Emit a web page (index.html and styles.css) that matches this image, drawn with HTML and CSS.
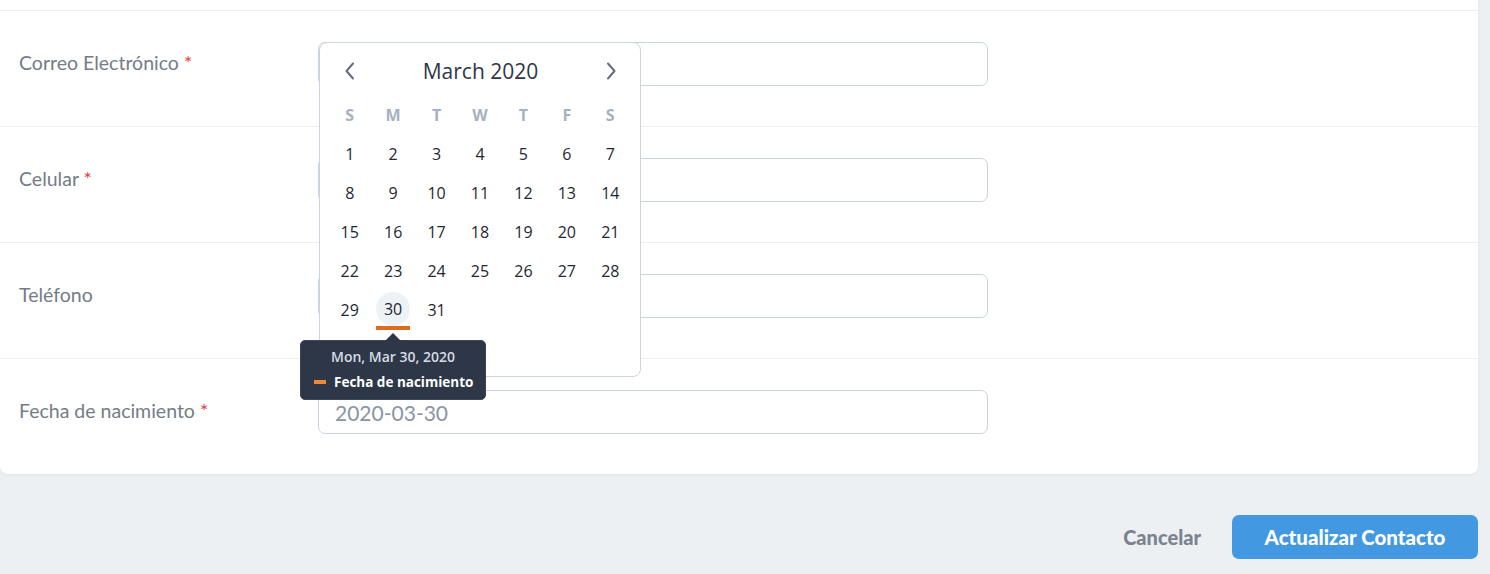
FILE: index.html
```html
<!DOCTYPE html>
<html lang="es">
<head>
<meta charset="utf-8">
<title>Editar contacto</title>
<link rel="stylesheet" href="styles.css">
</head>
<body>
<div class="page">
  <div class="card">
    <div class="row-stub"></div>
    <div class="row">
      <label class="label">Correo Electrónico <span class="req">*</span></label>
      <div class="input"></div>
    </div>
    <div class="row">
      <label class="label">Celular <span class="req">*</span></label>
      <div class="input"></div>
    </div>
    <div class="row">
      <label class="label">Teléfono</label>
      <div class="input"></div>
    </div>
    <div class="row last">
      <label class="label">Fecha de nacimiento <span class="req">*</span></label>
      <div class="input">2020-03-30</div>
    </div>

    <div class="popover">
      <div class="cal-header">
        <span class="arrow"><svg width="12" height="18" viewBox="0 0 12 18"><path d="M9 1.5 L2.5 9 L9 16.5" fill="none" stroke="#5f6e87" stroke-width="2" stroke-linecap="round" stroke-linejoin="round"/></svg></span>
        <span class="title">March 2020</span>
        <span class="arrow"><svg width="12" height="18" viewBox="0 0 12 18"><path d="M3 1.5 L9.5 9 L3 16.5" fill="none" stroke="#5f6e87" stroke-width="2" stroke-linecap="round" stroke-linejoin="round"/></svg></span>
      </div>
      <div class="grid weekdays">
        <span>S</span><span>M</span><span>T</span><span>W</span><span>T</span><span>F</span><span>S</span>
      </div>
      <div class="grid days">
        <span>1</span><span>2</span><span>3</span><span>4</span><span>5</span><span>6</span><span>7</span>
        <span>8</span><span>9</span><span>10</span><span>11</span><span>12</span><span>13</span><span>14</span>
        <span>15</span><span>16</span><span>17</span><span>18</span><span>19</span><span>20</span><span>21</span>
        <span>22</span><span>23</span><span>24</span><span>25</span><span>26</span><span>27</span><span>28</span>
        <span>29</span><span class="today"><i class="circle">30</i><i class="bar"></i></span><span>31</span><span></span><span></span><span></span><span></span>
        <span></span><span></span><span></span><span></span><span></span><span></span><span></span>
      </div>
      <div class="tooltip">
        <div class="tip-date">Mon, Mar 30, 2020</div>
        <div class="tip-attr"><i class="dash"></i>Fecha de nacimiento</div>
      </div>
    </div>
  </div>

  <div class="footer">
    <button class="btn-cancel">Cancelar</button>
    <button class="btn-primary">Actualizar Contacto</button>
  </div>
</div>
</body>
</html>
```

FILE: styles.css
```css
* { box-sizing: border-box; }
html, body {
  margin: 0;
  padding: 0;
  background: #edf0f3;
}
body {
  font-family: Lato, "Noto Sans", sans-serif;
  height: 574px;
  overflow: hidden;
}
.page {
  width: 1478px;
}
.card {
  position: relative;
  background: #fff;
  border-radius: 0 0 8px 8px;
  box-shadow: 0 1px 3px rgba(0, 0, 0, 0.05);
}
.row-stub {
  height: 11px;
  border-bottom: 1px solid #edeff2;
}
.row {
  display: flex;
  align-items: center;
  padding: 31px 0 40px 0;
  border-bottom: 1px solid #edeff2;
}
.row.last {
  border-bottom: none;
}
.label {
  width: 318px;
  padding-left: 19px;
  margin-top: -3px;
  font-size: 19.5px;
  color: #747c87;
}
.req {
  color: #e53e3e;
}
.input {
  width: 670px;
  height: 44px;
  border: 1px solid #c9d3df;
  border-radius: 7px;
  padding-left: 16px;
  display: flex;
  align-items: center;
  font-size: 21px;
  color: #8a94a3;
}

/* calendar popover */
.popover {
  position: absolute;
  left: 319px;
  top: 42px;
  width: 322px;
  height: 335px;
  background: #fff;
  border: 1px solid #cbd5e0;
  border-radius: 8px;
  padding: 8px 8px 0 8px;
  font-family: "Open Sans", "Noto Sans", sans-serif;
}
.cal-header {
  height: 40px;
  margin-bottom: 4px;
  display: flex;
  align-items: center;
  justify-content: space-between;
  padding: 0 15px 0 16px;
}
.arrow {
  display: flex;
  width: 12px;
  height: 18px;
}
.title {
  font-size: 21px;
  color: #2d3748;
  font-weight: 500;
}
.grid {
  display: grid;
  grid-template-columns: repeat(7, 1fr);
  grid-auto-rows: 39px;
}
.grid span {
  display: flex;
  align-items: center;
  justify-content: center;
  position: relative;
}
.weekdays span {
  font-size: 16px;
  font-weight: 700;
  color: #a5b1c2;
}
.days span {
  font-size: 16px;
  font-weight: 500;
  color: #1f2733;
}
.days i {
  font-style: normal;
}
.circle {
  width: 34px;
  height: 34px;
  border-radius: 50%;
  background: #edf2f7;
  display: flex;
  align-items: center;
  justify-content: center;
  margin-top: -2px;
}
.bar {
  position: absolute;
  left: 50%;
  margin-left: -17px;
  bottom: -1px;
  width: 34px;
  height: 4px;
  background: #dd6b20;
}

.tooltip {
  position: absolute;
  left: -20px;
  top: 297px;
  width: 186px;
  height: 60px;
  background: #2d3748;
  border: 1px solid #3b4556;
  border-radius: 5px;
  padding-top: 7px;
  font-size: 14px;
  font-weight: 600;
}
.tooltip::before {
  content: "";
  position: absolute;
  left: 84px;
  top: -8px;
  border-left: 8px solid transparent;
  border-right: 8px solid transparent;
  border-bottom: 8px solid #2d3748;
}
.tip-date {
  text-align: center;
  color: #d5dbe4;
  line-height: 18px;
}
.tip-attr {
  display: flex;
  align-items: center;
  margin-top: 7px;
  padding-left: 13px;
  color: #fff;
  font-size: 13.5px;
  font-weight: 700;
  line-height: 18px;
}
.dash {
  width: 12px;
  height: 4px;
  background: #ed8936;
  margin-right: 8px;
}

/* footer */
.footer {
  display: flex;
  justify-content: flex-end;
  align-items: center;
  gap: 31px;
  padding-top: 41px;
}
.btn-cancel {
  border: none;
  background: none;
  padding: 0;
  font-family: Lato, "Noto Sans", sans-serif;
  font-size: 20px;
  font-weight: 900;
  color: #7b838e;
}
.btn-primary {
  width: 246px;
  height: 44px;
  border: none;
  border-radius: 7px;
  background: #4299e1;
  color: #fff;
  font-family: Lato, "Noto Sans", sans-serif;
  font-size: 20.5px;
  font-weight: 900;
}
```
